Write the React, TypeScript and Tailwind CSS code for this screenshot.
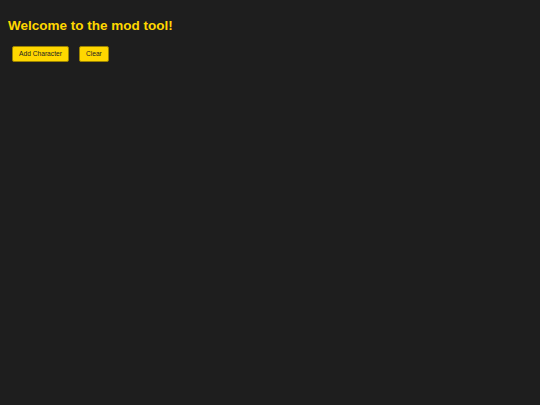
import React from "react";

export default function App() {
  return (
    <div
      className="min-h-[405px] w-full bg-[#1e1e1e] px-2 pt-[18px]"
      style={{ fontFamily: '"Liberation Sans", Arial, sans-serif' }}
    >
      <h1 className="text-[13.5px] font-bold leading-[15.5px] text-[#ffd700]">
        Welcome to the mod tool!
      </h1>
      <div className="mt-[12px] ml-[4px] flex gap-[10px]">
        <button className="flex h-[16.5px] items-center justify-center rounded-[2px] border border-[#9a8200] bg-[#ffd700] px-[6px] pt-[1px] text-[6.67px] leading-none text-[#222]">
          Add Character
        </button>
        <button className="flex h-[16.5px] items-center justify-center rounded-[2px] border border-[#9a8200] bg-[#ffd700] px-[6px] pt-[1px] text-[6.67px] leading-none text-[#222]">
          Clear
        </button>
      </div>
    </div>
  );
}
